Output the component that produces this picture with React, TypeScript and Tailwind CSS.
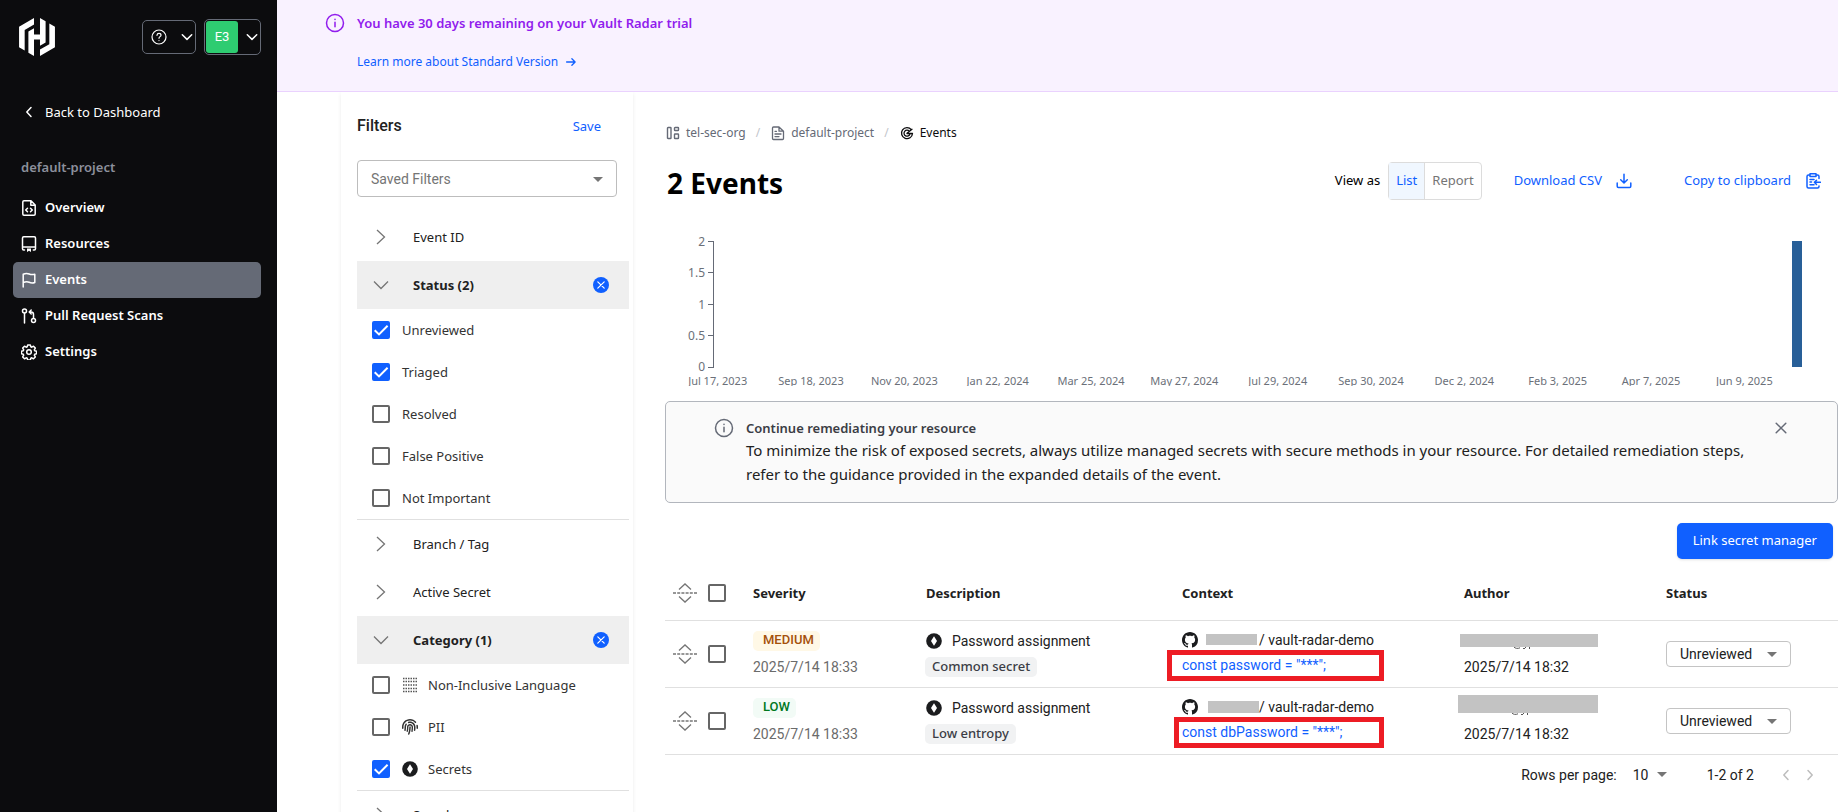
import React from "react";
import { SiHashicorp } from "react-icons/si";
import { FaFingerprint } from "react-icons/fa6";

const navItems = [
  { label: "Overview", icon: "overview", active: false },
  { label: "Resources", icon: "resources", active: false },
  { label: "Events", icon: "flag", active: true },
  { label: "Pull Request Scans", icon: "pull", active: false },
  { label: "Settings", icon: "gear", active: false },
];

const statusOptions = [
  { label: "Unreviewed", checked: true },
  { label: "Triaged", checked: true },
  { label: "Resolved", checked: false },
  { label: "False Positive", checked: false },
  { label: "Not Important", checked: false },
];

const categoryOptions = [
  { label: "Non-Inclusive Language", checked: false, icon: "dots" },
  { label: "PII", checked: false, icon: "finger" },
  { label: "Secrets", checked: true, icon: "secret" },
];

const chartDates = [
  "Jul 17, 2023",
  "Sep 18, 2023",
  "Nov 20, 2023",
  "Jan 22, 2024",
  "Mar 25, 2024",
  "May 27, 2024",
  "Jul 29, 2024",
  "Sep 30, 2024",
  "Dec 2, 2024",
  "Feb 3, 2025",
  "Apr 7, 2025",
  "Jun 9, 2025",
];

const chartTicks = ["2", "1.5", "1", "0.5", "0"];

const events = [
  {
    id: 1,
    severity: "MEDIUM",
    badge: "bg-[#fff8e6] text-[#a5510c]",
    tag: "Common secret",
    code: 'const password = "***";',
    codeBox: "-ml-[15px] pl-[10px] w-[217px] h-[31px]",
    mask: "ml-2 mr-0.5 w-[51px] h-[11px]",
    authorMask: "h-[13px] w-[138px] -ml-1",
  },
  {
    id: 2,
    severity: "LOW",
    badge: "bg-[#f2fbf6] text-[#00781e]",
    tag: "Low entropy",
    code: 'const dbPassword = "***";',
    codeBox: "-ml-2 pl-[3px] w-[210px] h-[31px]",
    mask: "ml-2.5 w-[51px] h-[12px]",
    authorMask: "-mt-2 h-[18px] w-[140px] -ml-1.5",
  },
];

function Icon({ name, className = "" }: { name: string; className?: string }) {
  const props = {
    viewBox: "0 0 16 16",
    width: 16,
    height: 16,
    fill: "none",
    stroke: "currentColor",
    strokeWidth: 1.5,
    strokeLinecap: "round" as const,
    strokeLinejoin: "round" as const,
    className: `shrink-0 ${className}`,
    "aria-hidden": true,
  };
  switch (name) {
    case "overview":
      return (
        <svg {...props}>
          <path d="M3 .75h7L14.2 5v9c0 .7-.5 1.2-1.2 1.2H3c-.7 0-1.200-.5-1.200-1.200V2C1.800 1.300 2.300.75 3 .75zM9.800 1v4.200H14M6.500 8.200 4.700 10l1.800 1.800M9.500 8.200l1.800 1.800-1.800 1.800" />
        </svg>
      );
    case "resources":
      return (
        <svg {...props}>
          <path d="M3.500 14h-.8c-.7 0-1.200-.5-1.200-1.200V2c0-.7.5-1.200 1.200-1.200h10.600c.7 0 1.200.5 1.200 1.200v10.800c0 .7-.5 1.200-1.200 1.200h-1M1.500 11h13" />
          <path d="M6 12.500h4V16l-2-1.200L6 16z" fill="currentColor" stroke="none" />
        </svg>
      );
    case "flag":
      return (
        <svg {...props}>
          <path d="M2.200 15V2.200C5 .9 6.500 1.200 8.200 2c1.800.8 3.300.9 5.600.2v8.300c-2.300.8-3.800.6-5.600-.2-1.700-.8-3.200-.9-6 .2" />
        </svg>
      );
    case "pull":
      return (
        <svg {...props}>
          <circle cx="3.500" cy="3" r="2" />
          <circle cx="12.500" cy="12.500" r="2" />
          <path d="M3.500 5.200V15M12.500 10.300V6.500c0-1.700-.8-2.500-2.500-2.500H8.300M10.200 2 8.200 4l2 2" />
        </svg>
      );
    case "gear":
      return (
        <svg {...props}>
          <circle cx="8" cy="8" r="2.300" />
          <path d="M6.700.9h2.600l.5 1.900 1 .4 1.700-1 1.800 1.900-1 1.700.4 1 1.900.4v2.500l-1.900.5-.4 1 1 1.700-1.800 1.900-1.700-1-1 .4-.5 1.900H6.700l-.5-1.900-1-.4-1.700 1-1.800-1.900 1-1.700-.4-1-1.900-.5V7.200l1.900-.4.400-1-1-1.700 1.800-1.900 1.700 1 1-.4z" />
        </svg>
      );
    case "back":
      return (
        <svg {...props}>
          <path d="M10 3.500 5.800 8l4.200 4.500" />
        </svg>
      );
    case "down":
      return (
        <svg {...props}>
          <path d="M3.300 5.800 8 10.400l4.700-4.600" />
        </svg>
      );
    case "collapse":
      return (
        <svg {...props}>
          <path d="M7.300 4 3.500 8l3.800 4M12.300 4 8.500 8l3.800 4" />
        </svg>
      );
    case "help":
      return (
        <svg {...props} strokeWidth={1.200}>
          <circle cx="8" cy="8" r="7" />
          <path d="M6 6.300c.1-1.200.9-1.900 2-1.900s2 .7 2 1.800c0 1.400-2 1.500-2 3M8 11.500v.1" />
        </svg>
      );
    case "info":
      return (
        <svg {...props} width={20} height={20} strokeWidth={1.200}>
          <circle cx="8" cy="8" r="6.800" />
          <path d="M8 7.300v3.600M8 5v.1" />
        </svg>
      );
    case "arrow":
      return (
        <svg {...props}>
          <path d="M3 8h9.500M9 4.300 12.700 8 9 11.700" />
        </svg>
      );
    case "org":
      return (
        <svg {...props} strokeWidth={1.400}>
          <rect x="2.500" y="2.500" width="3.500" height="11" rx=".6" />
          <rect x="9.500" y="2.500" width="4" height="3" rx=".6" />
          <rect x="9.500" y="9" width="4" height="4.500" rx=".6" />
        </svg>
      );
    case "doc":
      return (
        <svg {...props} strokeWidth={1.300}>
          <path d="M3.500 2H9L13.500 6.200v7.300c0 .6-.4 1-1 1h-9c-.6 0-1-.4-1-1V3c0-.6.4-1 1-1zM9 2.200v4h4.300M5 6.300h1.500M5 9h6M5 11.600h4" />
        </svg>
      );
    case "radar":
      return (
        <svg {...props} strokeWidth={1.300}>
          <path d="M12.300 4.700A5.500 5.500 0 1 0 13.500 8.500M10.300 6.200A3 3 0 1 0 10.900 9M8 8.300l5-4M13.500 8.500H8" />
        </svg>
      );
    case "download":
      return (
        <svg {...props}>
          <path d="M1.200 10v3.300c0 .7.500 1.200 1.200 1.200h11.200c.7 0 1.200-.5 1.200-1.200V10M8 1.200v8.500M4.700 6.700 8 10l3.300-3.300" />
        </svg>
      );
    case "clipboard":
      return (
        <svg {...props}>
          <path d="M4.500 2h-1C2.600 2 2 2.600 2 3.500v10c0 .9.600 1.500 1.500 1.500h9c.9 0 1.500-.6 1.500-1.500V13M14 5.500v-2c0-.9-.6-1.500-1.500-1.500h-1M5 .8h6v2.700H5zM5 6.500h4M5 9h1.500M5 11.700h4M15.500 9.300H9.500M11.500 7.200 9.400 9.300l2.100 2.200" />
        </svg>
      );
    case "close":
      return (
        <svg {...props} strokeWidth={1.500}>
          <path d="m3.200 3.200 9.600 9.600M12.800 3.200l-9.600 9.600" />
        </svg>
      );
    case "clear":
      return (
        <svg {...props}>
          <circle cx="8" cy="8" r="8" fill="#1060ff" stroke="none" />
          <path d="m4.800 4.800 6.400 6.400M11.200 4.800l-6.400 6.400" stroke="#fff" strokeWidth={1.200} />
        </svg>
      );
    case "dots":
      return (
        <svg {...props} stroke="#555" strokeLinecap="butt" strokeDasharray="1.500 1">
          <path d="M1 1.500h14M1 4.500h14M1 8h14M1 11.500h14M1 14.500h14" />
        </svg>
      );
    case "secret":
      return (
        <svg {...props}>
          <circle cx="8" cy="8" r="7.800" fill="#1b1c1e" stroke="none" />
          <path d="M8 3.200 11 8l-3 4.800L5 8z" fill="#fff" stroke="none" />
        </svg>
      );
    case "github":
      return (
        <svg {...props}>
          <path
            stroke="none"
            fill="#1b1c1e"
            d="M8 0C3.580 0 0 3.580 0 8c0 3.540 2.290 6.530 5.470 7.590.4.070.55-.17.55-.38 0-.19-.01-.82-.01-1.490-2.010.37-2.530-.49-2.690-.94-.09-.23-.48-.94-.82-1.130-.28-.15-.68-.52-.01-.53.63-.01 1.080.58 1.230.82.72 1.210 1.870.87 2.330.66.07-.52.28-.87.51-1.070-1.780-.2-3.640-.89-3.640-3.950 0-.87.31-1.590.82-2.150-.08-.2-.36-1.020.08-2.120 0 0 .67-.21 2.200.82.64-.18 1.320-.27 2-.27s1.360.09 2 .27c1.530-1.040 2.200-.82 2.200-.82.44 1.100.16 1.920.08 2.120.51.56.82 1.270.82 2.150 0 3.070-1.870 3.750-3.650 3.950.29.25.54.73.54 1.480 0 1.070-.01 1.930-.01 2.200 0 .21.15.46.55.38A8.010 8.010 0 0 0 16 8c0-4.420-3.580-8-8-8z"
          />
        </svg>
      );
    default:
      return null;
  }
}

function Caret({ className = "" }: { className?: string }) {
  return (
    <svg viewBox="0 0 10 5" width="10" height="5" className={`pointer-events-none shrink-0 fill-[#757575] ${className}`} aria-hidden>
      <path d="M0 0h10L5 5z" />
    </svg>
  );
}

function ExpandAll() {
  return (
    <svg viewBox="0 0 24 20" width="24" height="20" fill="none" stroke="#757575" strokeWidth="1.300" aria-hidden>
      <path d="M6 6.500 12 1l6 5.500M6 13.500 12 19l6-5.500" />
      <path d="M0 10h24" strokeDasharray="3 1.200" />
    </svg>
  );
}

function Checkbox({ id, checked = false, label }: { id: string; checked?: boolean; label?: string }) {
  return (
    <span className="relative block size-[18px] shrink-0">
      <input
        id={id}
        type="checkbox"
        defaultChecked={checked}
        aria-label={label}
        className="peer block size-[18px] appearance-none rounded-xs border-2 border-[#666] checked:border-[#1060ff] checked:bg-[#1060ff]"
      />
      <svg
        viewBox="0 0 18 18"
        className="pointer-events-none absolute inset-0 hidden size-[18px] peer-checked:block"
        fill="none"
        stroke="#fff"
        strokeWidth="2"
        aria-hidden
      >
        <path d="m2.700 9.200 4.300 4.200 8.600-8.700" />
      </svg>
    </span>
  );
}

function FilterHeader({ label, open = false }: { label: string; open?: boolean }) {
  return (
    <div className={`flex h-12 items-center pl-4 pr-5 ${open ? "bg-[#efefef]" : ""}`}>
      <button type="button" aria-expanded={open} className="flex flex-1 items-center gap-6 text-left">
        <svg viewBox="0 0 16 16" width="16" height="16" fill="none" stroke="#757575" strokeWidth="1.300" className="shrink-0" aria-hidden>
          {open ? <path d="m1 4.500 7 7 7-7" /> : <path d="m4 1 7.500 7L4 15" />}
        </svg>
        <span className={`pt-0.5 text-[#212121] ${open ? "font-bold" : ""}`}>{label}</span>
      </button>
      {open && (
        <button type="button" aria-label={`Clear ${label}`}>
          <Icon name="clear" />
        </button>
      )}
    </div>
  );
}

function FilterOption({ label, checked, icon }: { label: string; checked: boolean; icon?: string }) {
  const id = `filter-${label}`;
  return (
    <div className="flex h-[42px] items-center gap-3 pl-[15px]">
      <Checkbox id={id} checked={checked} />
      <label htmlFor={id} className="flex items-center gap-2.5 text-[#333]">
        {icon === "finger" ? <FaFingerprint size={16} /> : icon && <Icon name={icon} />}
        <span className="pt-0.5">{label}</span>
      </label>
    </div>
  );
}

function Sidebar() {
  return (
    <aside className="relative w-[277px] shrink-0 bg-[#0c0c0e] text-white">
      <div className="flex items-center pl-[18px] pr-4 pt-[18px]">
        <SiHashicorp size={38} className="mr-auto" />
        <button type="button" aria-label="Help" className="flex h-[34px] w-[54px] items-center justify-between rounded-[5px] border border-[#656a76] pl-2">
          <Icon name="help" />
          <Icon name="down" />
        </button>
        <button type="button" aria-label="Account" className="ml-2 flex h-9 w-[57px] items-center justify-between rounded-[5px] border border-[#656a76] pl-px">
          <span className="flex h-8 w-8 items-center justify-center rounded-[3px] bg-[#2ecc71] font-[Roboto] text-[13px]">E3</span>
          <Icon name="down" />
        </button>
      </div>
      <button
        type="button"
        aria-label="Collapse menu"
        className="absolute left-full top-[19px] flex h-9 w-[21px] items-center justify-center rounded-r-[5px] bg-[#0c0c0e] shadow"
      >
        <Icon name="collapse" />
      </button>
      <a href="#" className="mt-[38px] flex h-9 items-center gap-2 pl-[21px]">
        <Icon name="back" />
        <span className="pt-0.5">Back to Dashboard</span>
      </a>
      <div className="mt-5 flex h-9 items-center pl-[21px] font-semibold text-[#8c909c]">default-project</div>
      <nav className="mt-1 pl-[13px] pr-4">
        {navItems.map((item) => (
          <a
            key={item.label}
            href="#"
            className={`flex h-9 items-center gap-2 rounded-[5px] px-2 font-semibold ${item.active ? "bg-[#656a76]" : ""}`}
          >
            <Icon name={item.icon} />
            {item.label}
          </a>
        ))}
      </nav>
    </aside>
  );
}

function Filters() {
  return (
    <section className="ml-16 w-[292px] shrink-0 pl-4 pr-1 shadow-[0_2px_4px_rgba(0,0,0,0.08)]">
      <div className="flex items-center justify-between pr-7 pt-[22px]">
        <h2 className="font-[Roboto] text-base font-medium text-[#212121]">Filters</h2>
        <button type="button" className="pt-0.5 text-[#1060ff]">Save</button>
      </div>
      <div className="relative mr-3 mt-[22px]">
        <select
          aria-label="Saved Filters"
          className="h-[37px] w-full appearance-none rounded border border-[#bdbdbd] bg-white px-[13px] font-[Roboto] text-sm text-[#757575]"
        >
          <option>Saved Filters</option>
        </select>
        <Caret className="absolute right-[14px] top-[17px]" />
      </div>
      <div className="mt-4">
        <FilterHeader label="Event ID" />
        <FilterHeader label="Status (2)" open />
        {statusOptions.map((option) => (
          <FilterOption key={option.label} {...option} />
        ))}
      </div>
      <div className="border-t border-[#e0e0e0]">
        <FilterHeader label="Branch / Tag" />
        <FilterHeader label="Active Secret" />
        <FilterHeader label="Category (1)" open />
        {categoryOptions.map((option) => (
          <FilterOption key={option.label} {...option} />
        ))}
      </div>
      <div className="border-t border-[#e0e0e0]">
        <FilterHeader label="Search" />
      </div>
    </section>
  );
}

function Chart() {
  return (
    <figure className="mt-[30px] h-[156px] overflow-hidden pt-[11px] text-[12px] text-[#6b7079]">
      <div className="flex pl-5 pr-9">
        <div className="-my-[7px] flex h-[141px] w-5 flex-col justify-between text-right leading-4">
          {chartTicks.map((tick) => (
            <span key={tick}>{tick}</span>
          ))}
        </div>
        <svg viewBox="0 0 7 127" width="7" height="127" className="ml-0.5 shrink-0" stroke="#656a76" fill="none" aria-hidden>
          <path d="M6.500 0v127M1 .5h5.500M1 31.500h5.500M1 63.500h5.500M1 94.500h5.500M1 126.500h5.500" />
        </svg>
        <div className="flex h-[126px] flex-1 justify-end">
          <div className="w-[10px] bg-[#285f98]" />
        </div>
      </div>
      <figcaption className="grid grid-cols-12 pl-1.5 pr-[47px] pt-[3px] text-center text-[11px] leading-5">
        {chartDates.map((date) => (
          <span key={date}>{date}</span>
        ))}
      </figcaption>
    </figure>
  );
}

function EventsTable() {
  return (
    <table className="mt-2 w-full table-fixed border-collapse text-left font-[Roboto] text-sm text-[#212121]">
      <colgroup>
        <col className="w-[88px]" />
        <col className="w-[173px]" />
        <col className="w-[256px]" />
        <col className="w-[282px]" />
        <col className="w-[202px]" />
        <col />
      </colgroup>
      <thead>
        <tr className="h-[53px] border-b border-[#e0e0e0] font-['Noto_Sans'] text-[13px]">
          <th>
            <div className="flex items-center gap-[11px] pl-2">
              <ExpandAll />
              <Checkbox id="select-all" label="Select all events" />
            </div>
          </th>
          <th className="font-bold">Severity</th>
          <th className="font-bold">Description</th>
          <th className="font-bold">Context</th>
          <th className="font-bold">Author</th>
          <th className="font-bold">Status</th>
        </tr>
      </thead>
      <tbody>
        {events.map((event) => (
          <tr key={event.id} className="h-[67px] border-b border-[#e0e0e0]">
            <td>
              <div className="flex items-center gap-[11px] pl-2">
                <ExpandAll />
                <Checkbox id={`select-${event.id}`} label={`Select event ${event.id}`} />
              </div>
            </td>
            <td>
              <span className={`flex h-5 w-fit items-center rounded-[5px] pl-2.5 pr-1.5 text-[13px] font-medium ${event.badge}`}>
                {event.severity}
              </span>
              <div className="mt-1.5 leading-5 text-[#6b6b6b]">2025/7/14 18:33</div>
            </td>
            <td>
              <div className="flex h-5 items-center gap-2.5">
                <Icon name="secret" />
                Password assignment
              </div>
              <span className="-ml-px mt-1.5 flex h-5 w-fit items-center rounded-[5px] bg-[#f1f2f3] px-[7px] font-['Noto_Sans'] text-[13px] font-medium text-[#3b3d45]">
                {event.tag}
              </span>
            </td>
            <td className="pt-[3px]">
              <div className="flex h-5 items-center">
                <Icon name="github" />
                <span className={`bg-[#c3c3c3] ${event.mask}`} />
                / vault-radar-demo
              </div>
              <a href="#" className={`flex items-center border-[5px] border-[#ed1c24] text-[#1060ff] ${event.codeBox}`}>
                {event.code}
              </a>
            </td>
            <td>
              <div className="flex h-5 items-center">
                <span className={`relative bg-[#c3c3c3] ${event.authorMask}`}>
                  <svg viewBox="0 0 20 3" width="20" height="3" className="absolute left-[53px] top-full" fill="none" stroke="#555" aria-hidden>
                    <path d="M1 0c1 1.500 4 1.800 6 .8M10 1.500h2M12.500 0v1M16.500 0v2" />
                  </svg>
                </span>
              </div>
              <div className="mt-1.5 leading-5">2025/7/14 18:32</div>
            </td>
            <td>
              <div className="relative w-[125px]">
                <select
                  aria-label={`Status of event ${event.id}`}
                  className="block h-[26px] w-full appearance-none rounded border border-[#c4c4c4] bg-white pl-[13px]"
                >
                  <option>Unreviewed</option>
                </select>
                <Caret className="absolute right-[14px] top-[11px]" />
              </div>
            </td>
          </tr>
        ))}
      </tbody>
    </table>
  );
}

export default function App() {
  return (
    <div className="flex h-screen overflow-hidden bg-white font-['Noto_Sans',sans-serif] text-[13px] text-black">
      <Sidebar />
      <div className="flex min-w-0 flex-1 flex-col">
        <div className="relative -z-0 flex h-[92px] shrink-0 gap-3 border-b border-[#ead2fe] bg-[#f9f2ff] pl-12 pt-[13px]">
          <Icon name="info" className="text-[#911ced]" />
          <div>
            <p className="font-semibold leading-5 text-[#911ced]">You have 30 days remaining on your Vault Radar trial</p>
            <a href="#" className="mt-[19px] flex items-center gap-1.5 text-xs leading-5 text-[#1060ff]">
              Learn more about Standard Version
              <Icon name="arrow" className="size-3.5" />
            </a>
          </div>
        </div>
        <div className="flex flex-1">
          <Filters />
          <main className="ml-8 min-w-0 flex-1">
            <nav aria-label="Breadcrumb" className="mt-[31px] flex h-5 items-center text-xs text-[#656a76]">
              <a href="#" className="flex items-center gap-[5px]">
                <Icon name="org" />
                tel-sec-org
              </a>
              <span className="mx-2.5 text-[#c2c5cb]">/</span>
              <a href="#" className="flex items-center gap-[5px]">
                <Icon name="doc" />
                default-project
              </a>
              <span className="mx-2.5 text-[#c2c5cb]">/</span>
              <span className="flex items-center gap-[5px] text-[#0c0c0e]">
                <Icon name="radar" />
                Events
              </span>
            </nav>
            <div className="mt-[19px] flex h-[38px] items-center pr-[17px]">
              <h1 className="mr-auto pl-0.5 pt-[3px] text-[28px] font-bold">2 Events</h1>
              <span className="mr-2">View as</span>
              <div className="flex h-[38px] rounded border border-[#dcdcdc]">
                <button type="button" className="border-r border-[#dcdcdc] bg-[#f0f7ff] px-[7px] text-[#1060ff]">List</button>
                <button type="button" className="px-[7px] text-[#757575]">Report</button>
              </div>
              <button type="button" className="ml-8 flex items-center gap-3.5 text-[#1060ff]">
                Download CSV
                <Icon name="download" />
              </button>
              <button type="button" className="ml-[52px] flex items-center gap-3.5 text-[#1060ff]">
                Copy to clipboard
                <Icon name="clipboard" />
              </button>
            </div>
            <Chart />
            <div className="mt-[15px] flex h-[102px] items-start rounded-[5px] border border-[#b2b6bd] bg-[#fafafa] px-12 pt-4">
              <Icon name="info" className="text-[#656a76]" />
              <div className="ml-3 flex-1">
                <p className="font-semibold leading-5 text-[#3b3d45]">Continue remediating your resource</p>
                <p className="max-w-[1010px] text-[15px] leading-6 text-[#212121]">
                  To minimize the risk of exposed secrets, always utilize managed secrets with secure methods in your
                  resource. For detailed remediation steps, refer to the guidance provided in the expanded details of
                  the event.
                </p>
              </div>
              <button type="button" aria-label="Dismiss" className="mt-0.5 text-[#656a76]">
                <Icon name="close" />
              </button>
            </div>
            <div className="mt-5 flex justify-end pr-[5px]">
              <button type="button" className="h-9 rounded-[5px] bg-[#1060ff] px-4 text-white shadow-sm">
                Link secret manager
              </button>
            </div>
            <EventsTable />
            <div className="mt-2.5 flex items-center justify-end pr-5 font-[Roboto] text-sm text-[#212121]">
              <label htmlFor="rows">Rows per page:</label>
              <div className="relative ml-4 flex w-[34px] items-center">
                <select id="rows" className="w-full appearance-none">
                  <option>10</option>
                </select>
                <Caret className="absolute right-0" />
              </div>
              <span className="ml-10">1-2 of 2</span>
              <button type="button" aria-label="Previous page" className="ml-6 text-[#bdbdbd]">
                <Icon name="back" />
              </button>
              <button type="button" aria-label="Next page" className="ml-2 text-[#bdbdbd]">
                <Icon name="back" className="rotate-180" />
              </button>
            </div>
          </main>
        </div>
      </div>
    </div>
  );
}
